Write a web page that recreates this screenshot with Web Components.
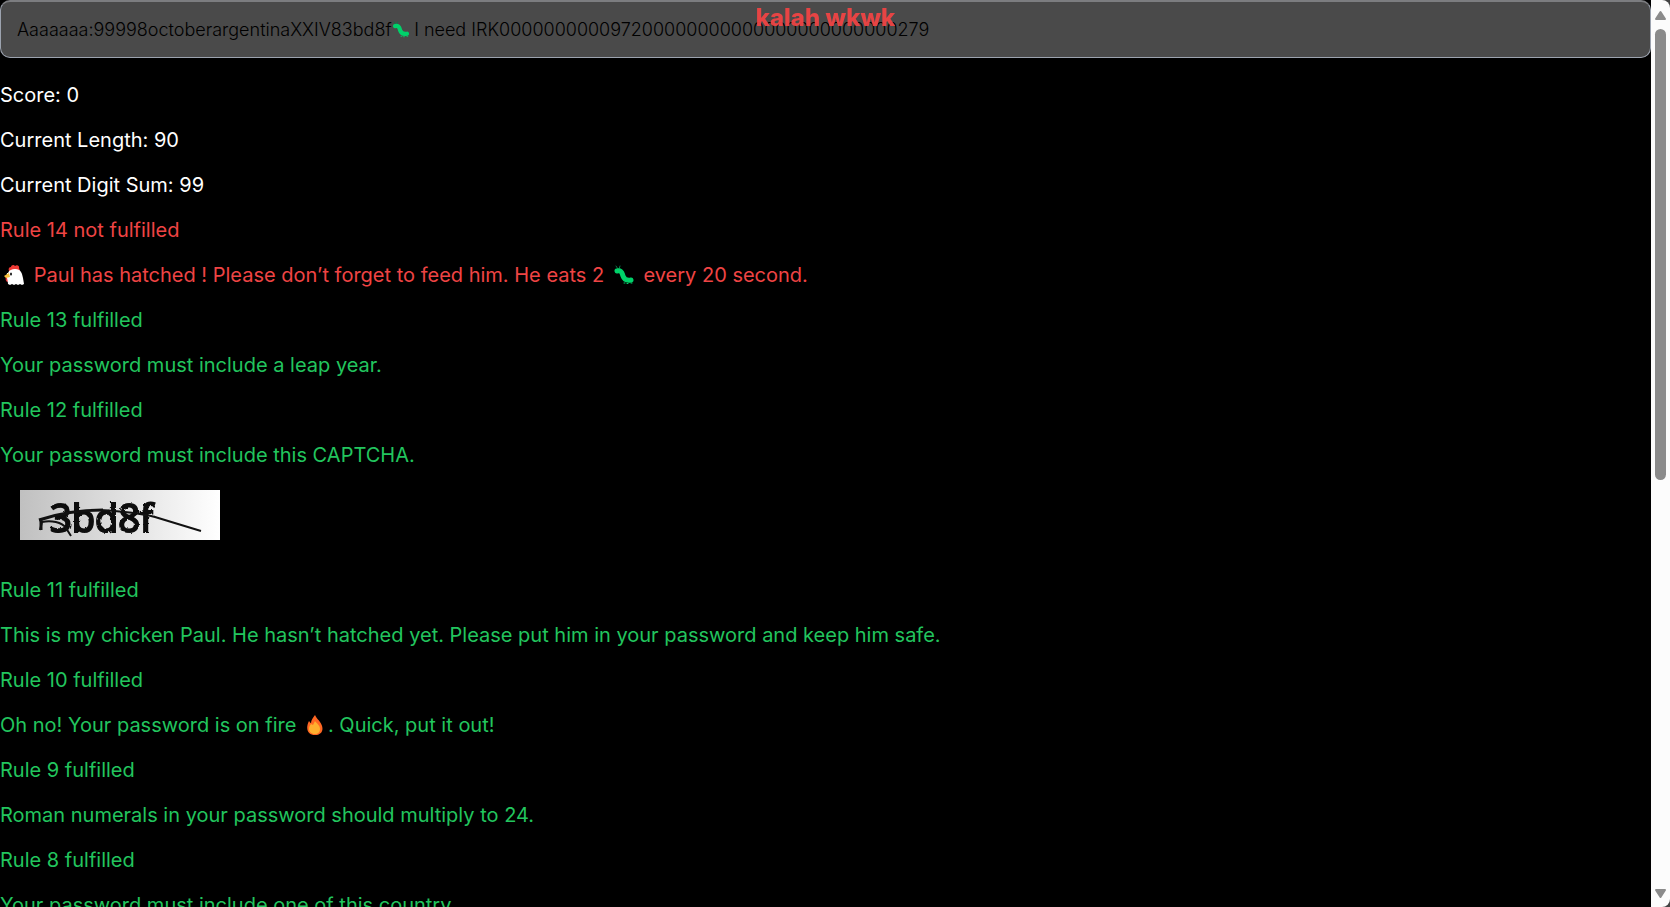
<!DOCTYPE html>
<html lang="en">
<head>
<meta charset="utf-8">
<title>Password Game</title>
<style>
html, body { margin: 0; height: 100%; background: #000; }
body { font-family: Inter, "Liberation Sans", sans-serif; font-size: 20px; line-height: 30px; color: #fff; }
</style>
</head>
<body>
<password-game></password-game>
<script>
const define = (name, html, setup) => customElements.define(name, class extends HTMLElement {
  connectedCallback() {
    if (this.shadowRoot) return;
    this.attachShadow({ mode: 'open' }).innerHTML = html;
    if (setup) setup(this, this.shadowRoot);
  }
});

define('emoji-worm', `
<style>:host{display:inline-block;width:20px;height:20px}svg{display:block;width:100%;height:100%}</style>
<svg viewBox="0 0 20 20" role="img" aria-label="worm" fill="none" stroke-linecap="round" stroke-linejoin="round">
<path d="M2 1l2 3M6 1L5 4" stroke="#087a48" stroke-width="1"/>
<path d="M3 6C8 5 8 8 9 11s3 5 8 4" stroke="#00d26a" stroke-width="5"/>
<path d="M10 18h1M13 18.500h1M17 18h1" stroke="#00d26a" stroke-width="1"/>
</svg>`);

define('emoji-chicken', `
<style>:host{display:inline-block;width:20px;height:22px}svg{display:block;width:100%;height:100%}</style>
<svg viewBox="0 0 20 22" role="img" aria-label="chicken">
<path d="M5 7c-1-2 0-4 2-4 0-2 3-3 4-1 2-2 5 0 4 2l1 3z" fill="#f03a35"/>
<path d="M2 13c-1 2 0 5 2 5s2-3 1-5z" fill="#e8323a"/>
<path d="M4 9c1-3 4-4 7-4 6 0 7 4 8 9l1 6-2 1-2-1-2 1-2-1-2 1-2-1-2 1-2-1c0-4-2-7-1-11z" fill="#fff"/>
<path d="M5 9l-5 3 2 2 4-1z" fill="#f9c23c"/><ellipse cx="7" cy="10" rx="1" ry="1.5" fill="#1c1c1c"/>
</svg>`);

define('emoji-fire', `
<style>:host{display:inline-block;width:16px;height:20px}svg{display:block;width:100%;height:100%}</style>
<svg viewBox="0 0 16 20" role="img" aria-label="fire">
<path d="M8 0c1 3 4 5 5 7 5 7 2 13-5 13S-2 14 2 6c1 1 1 2 2 2C4 5 6 3 8 0z" fill="#ff6723"/>
<path d="M8 6c1 2 5 4 5 8 0 3-2 5-5 5s-6-2-6-5c0-2 1-4 2-5l2 1z" fill="#ffb02e"/>
</svg>`);

define('password-field', `
<style>
:host{display:block;position:relative;height:58px}
input{display:block;box-sizing:border-box;width:100%;height:100%;margin:0;padding:0 16px;border:1px solid #9ca3af;border-top-width:2px;border-top-color:#7c7d80;border-radius:10px;background:#4a4a4a;color:#000;font:300 18px/28px Inter,"Liberation Sans",sans-serif;outline:0}
emoji-worm{position:absolute;left:392px;top:21px;width:18px;height:17px}
</style>
<input type="text" aria-label="Password" spellcheck="false"><emoji-worm></emoji-worm>`, (host, root) => {
  root.querySelector('input').value = host.getAttribute('value');
});

define('status-line', `
<style>:host{display:block}p{margin:0}</style><p><slot></slot></p>`);

define('rule-item', `
<style>
:host{display:flex;flex-direction:column;gap:15px;color:#22c55e}
:host([state="failed"]){color:#ef4444}
p{margin:0}
</style>
<p class="title"></p><p><slot></slot></p><slot name="picture"></slot>`, (host, root) => {
  const failed = host.getAttribute('state') === 'failed';
  root.querySelector('.title').textContent = 'Rule ' + host.getAttribute('number') + (failed ? ' not fulfilled' : ' fulfilled');
});

define('captcha-picture', `
<style>:host{display:block;padding:5px 20px 20px}svg{display:block;width:200px;height:50px}</style>
<svg viewBox="0 0 200 50">
<defs>
<linearGradient id="bg"><stop stop-color="#c0c0c0"/><stop offset="1" stop-color="#fff"/></linearGradient>
<filter id="rough" x="-10%" y="-10%" width="120%" height="120%"><feTurbulence type="fractalNoise" baseFrequency=".3" numOctaves="2" seed="4"/><feDisplacementMap in="SourceGraphic" scale="3"/></filter>
</defs>
<rect width="200" height="50" fill="url(#bg)"/>
<text x="30" y="42" filter="url(#rough)" font-family="Open Sans, sans-serif" font-size="38" fill="#080808" stroke="#080808" stroke-width="2">3bd8f</text>
<g fill="none" stroke="#111">
<path d="M19 30C43 22 67 20 83 20" stroke-width="3"/><path d="M80 20c18 1 36 2 55 7l46 14" stroke-width="2"/>
<path d="M20 40l2-8c9-2 20 0 24 6l5 8" stroke-width="2"/><path d="M21 30v10" stroke-width="3"/>
</g>
</svg>`);

define('toast-message', `
<style>:host{display:block;font-size:24px;line-height:32px;font-weight:800;color:#ef4444;opacity:.95;pointer-events:none}</style><slot></slot>`);

define('page-scrollbar', `
<style>
:host{display:flex;flex-direction:column;align-items:center;box-sizing:border-box;padding:10px 0 8px;background:#fcfcfc;border-radius:0 8px 8px 0}
svg{display:block;width:13px;height:10px;fill:#8b8b8b;stroke:#8b8b8b;stroke-width:2;stroke-linejoin:round}
.track{flex:1;margin:9px 0;display:flex}
.thumb{width:11px;height:53%;border-radius:6px;background:#8b8b8b}
</style>
<svg viewBox="0 0 13 10"><path d="M2 9h9L6.500 2z"/></svg>
<div class="track"><div class="thumb"></div></div>
<svg viewBox="0 0 13 10"><path d="M2 1h9L6.500 8z"/></svg>`);

define('password-game', `
<style>
:host{display:grid;grid-template-columns:minmax(0,1fr) 19px;height:100vh;overflow:hidden;background:linear-gradient(to left,#444 19px,#000 19px)}
main{position:relative;min-width:0;min-height:0;overflow:hidden}
.lines{display:flex;flex-direction:column;gap:15px;margin-top:22px}
toast-message{position:absolute;top:2px;left:50%;transform:translateX(-50%);white-space:nowrap}
emoji-chicken{margin:0 4px 0 4px;vertical-align:-4px}
emoji-worm{margin:0 4px;vertical-align:-3px}
emoji-fire{margin:0 5px;vertical-align:-3px}
</style>
<main>
<password-field value="Aaaaaaa:99998octoberargentinaXXIV83bd8f\u2003\u2005I need IRK${'0'.repeat(10)}972${'0'.repeat(23)}279"></password-field>
<toast-message>kalah wkwk</toast-message>
<div class="lines">
<status-line>Score: 0</status-line>
<status-line>Current Length: 90</status-line>
<status-line>Current Digit Sum: 99</status-line>
<rule-item number="14" state="failed"><emoji-chicken></emoji-chicken> Paul has hatched ! Please don’t forget to feed him. He eats 2 <emoji-worm></emoji-worm> every 20 second.</rule-item>
<rule-item number="13">Your password must include a leap year.</rule-item>
<rule-item number="12">Your password must include this CAPTCHA.<captcha-picture slot="picture"></captcha-picture></rule-item>
<rule-item number="11">This is my chicken Paul. He hasn’t hatched yet. Please put him in your password and keep him safe.</rule-item>
<rule-item number="10">Oh no! Your password is on fire <emoji-fire></emoji-fire>. Quick, put it out!</rule-item>
<rule-item number="9">Roman numerals in your password should multiply to 24.</rule-item>
<rule-item number="8">Your password must include one of this country.</rule-item>
</div>
</main>
<page-scrollbar aria-hidden="true"></page-scrollbar>`);
</script>
</body>
</html>
